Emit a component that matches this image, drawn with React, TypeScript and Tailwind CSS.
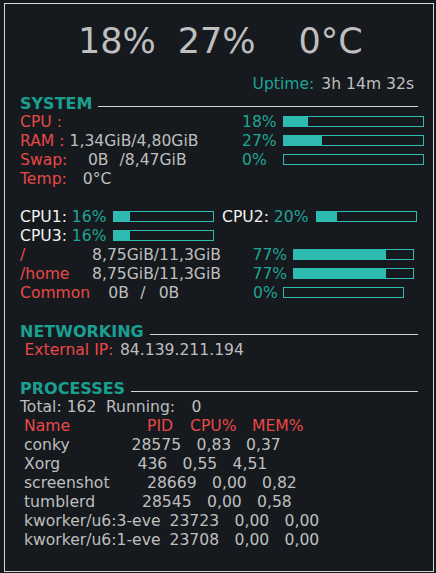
import React from "react";

const teal = "text-[#1ea496]";
const red = "text-[#e84848]";
const gray = "text-[#bfbfbf]";

const Bar = ({ w, pct }: { w: string; pct: number }) => (
  <div className={`mt-[3px] h-[11px] shrink-0 border border-[#2ebab2] ${w}`}>
    <div className="h-full bg-[#2ebab2]" style={{ width: `${pct}%` }} />
  </div>
);

const Heading = ({ title }: { title: string }) => (
  <div className="flex h-[19px] items-start">
    <span className="text-[16px] font-bold text-[#1a9f91]">{title}</span>
    <div className="ml-[6px] mt-[12px] h-px flex-1 bg-[#d4d4d4]" />
  </div>
);

const procs = [
  { name: "conky", pid: "28575", cpu: "0,83", mem: "0,37", w: ["w-[107.5px]", "w-[65px]", "w-[49.5px]"] },
  { name: "Xorg", pid: "436", cpu: "0,55", mem: "4,51", w: ["w-[113.5px]", "w-[45px]", "w-[50px]"] },
  { name: "screenshot", pid: "28669", cpu: "0,00", mem: "0,82", w: ["w-[123px]", "w-[65px]", "w-[50px]"] },
  { name: "tumblerd", pid: "28545", cpu: "0,00", mem: "0,58", w: ["w-[118px]", "w-[65px]", "w-[50px]"] },
  { name: "kworker/u6:3-eve", pid: "23723", cpu: "0,00", mem: "0,00", w: ["w-[145.5px]", "w-[65px]", "w-[50px]"] },
  { name: "kworker/u6:1-eve", pid: "23708", cpu: "0,00", mem: "0,00", w: ["w-[145.5px]", "w-[65px]", "w-[50px]"] },
];

export default function App() {
  return (
    <div className="h-[573px] w-[436px] bg-[#161a1e] pl-[4px] pt-[3px] font-['DejaVu_Sans',sans-serif]">
      <div className="h-[569px] w-[430px] border border-[#d6d6d6] px-[15px] text-[15.6px] leading-[19px] whitespace-pre">
        {/* big summary line */}
        <div className={`mt-[16px] pl-[58px] text-[35px] leading-[42px] ${gray}`}>
          <span>18%</span>
          <span className="ml-[22px]">27%</span>
          <span className="ml-[43px]">0°C</span>
        </div>

        <div className="mt-[13px] flex h-[19px] pl-[232.5px]">
          <span className={teal}>Uptime:</span>
          <span className={`ml-[7px] ${gray}`}>3h 14m 32s</span>
        </div>

        <Heading title="SYSTEM" />
        <div className="flex h-[19px]">
          <div className={`w-[222px] shrink-0 ${red}`}>CPU :</div>
          <div className={`w-[41px] shrink-0 ${teal}`}>18%</div>
          <Bar w="w-[141px]" pct={17} />
        </div>
        <div className="flex h-[19px]">
          <div className="w-[222px] shrink-0">
            <span className={red}>RAM :</span>
            <span className={gray}> 1,34GiB/4,80GiB</span>
          </div>
          <div className={`w-[41px] shrink-0 ${teal}`}>27%</div>
          <Bar w="w-[141px]" pct={27} />
        </div>
        <div className="flex h-[19px]">
          <div className={`flex w-[222px] shrink-0 ${gray}`}>
            <span className={red}>Swap:</span>
            <span className="ml-[20.5px]">0B</span>
            <span className="ml-[11px]">/8,47GiB</span>
          </div>
          <div className={`w-[41px] shrink-0 ${teal}`}>0%</div>
          <Bar w="w-[141px]" pct={0} />
        </div>
        <div className="flex h-[19px]">
          <span className={red}>Temp:</span>
          <span className={`ml-[16px] ${gray}`}>0°C</span>
        </div>
        <div className="h-[19px]" />

        <div className="flex h-[19px]">
          <div className="w-[93px] shrink-0">
            <span className="text-[#f2f2f2]">CPU1:</span>
            <span className={teal}> 16%</span>
          </div>
          <Bar w="w-[101px]" pct={16} />
          <div className="ml-[8px] w-[94px] shrink-0">
            <span className="text-[#f2f2f2]">CPU2:</span>
            <span className={teal}> 20%</span>
          </div>
          <Bar w="w-[101px]" pct={20} />
        </div>
        <div className="flex h-[19px]">
          <div className="w-[93px] shrink-0">
            <span className="text-[#f2f2f2]">CPU3:</span>
            <span className={teal}> 16%</span>
          </div>
          <Bar w="w-[101px]" pct={16} />
        </div>
        {["/", "/home"].map((fs) => (
          <div key={fs} className="flex h-[19px]">
            <div className={`w-[72px] shrink-0 ${red}`}>{fs}</div>
            <div className={`w-[160.5px] shrink-0 ${gray}`}>8,75GiB/11,3GiB</div>
            <div className={`w-[40.5px] shrink-0 ${teal}`}>77%</div>
            <Bar w="w-[121px]" pct={77} />
          </div>
        ))}
        <div className="flex h-[19px]">
          <div className={`flex w-[233px] shrink-0 ${gray}`}>
            <span className={red}>Common</span>
            <span className="ml-[18px]">0B</span>
            <span className="ml-[11.5px]">/</span>
            <span className="ml-[13px]">0B</span>
          </div>
          <div className={`w-[30px] shrink-0 ${teal}`}>0%</div>
          <Bar w="w-[121px]" pct={0} />
        </div>
        <div className="h-[19px]" />

        <Heading title="NETWORKING" />
        <div className="flex h-[19px] pl-[4.5px]">
          <span className={red}>External IP:</span>
          <span className={`ml-[6.5px] ${gray}`}>84.139.211.194</span>
        </div>
        <div className="h-[19px]" />

        <Heading title="PROCESSES" />
        <div className={`flex h-[19px] ${gray}`}>
          <span>Total: 162</span>
          <span className="ml-[9.5px]">Running:</span>
          <span className="ml-[16.5px]">0</span>
        </div>
        <div className={`flex h-[19px] pl-[4px] ${red}`}>
          <div className="w-[123px] shrink-0">Name</div>
          <div className="w-[43px] shrink-0">PID</div>
          <div className="w-[62px] shrink-0">CPU%</div>
          <div>MEM%</div>
        </div>
        {procs.map((p) => (
          <div key={p.name} className={`flex h-[19px] pl-[4px] ${gray}`}>
            <div className={`shrink-0 ${p.w[0]}`}>{p.name}</div>
            <div className={`shrink-0 ${p.w[1]}`}>{p.pid}</div>
            <div className={`shrink-0 ${p.w[2]}`}>{p.cpu}</div>
            <div>{p.mem}</div>
          </div>
        ))}
      </div>
    </div>
  );
}
